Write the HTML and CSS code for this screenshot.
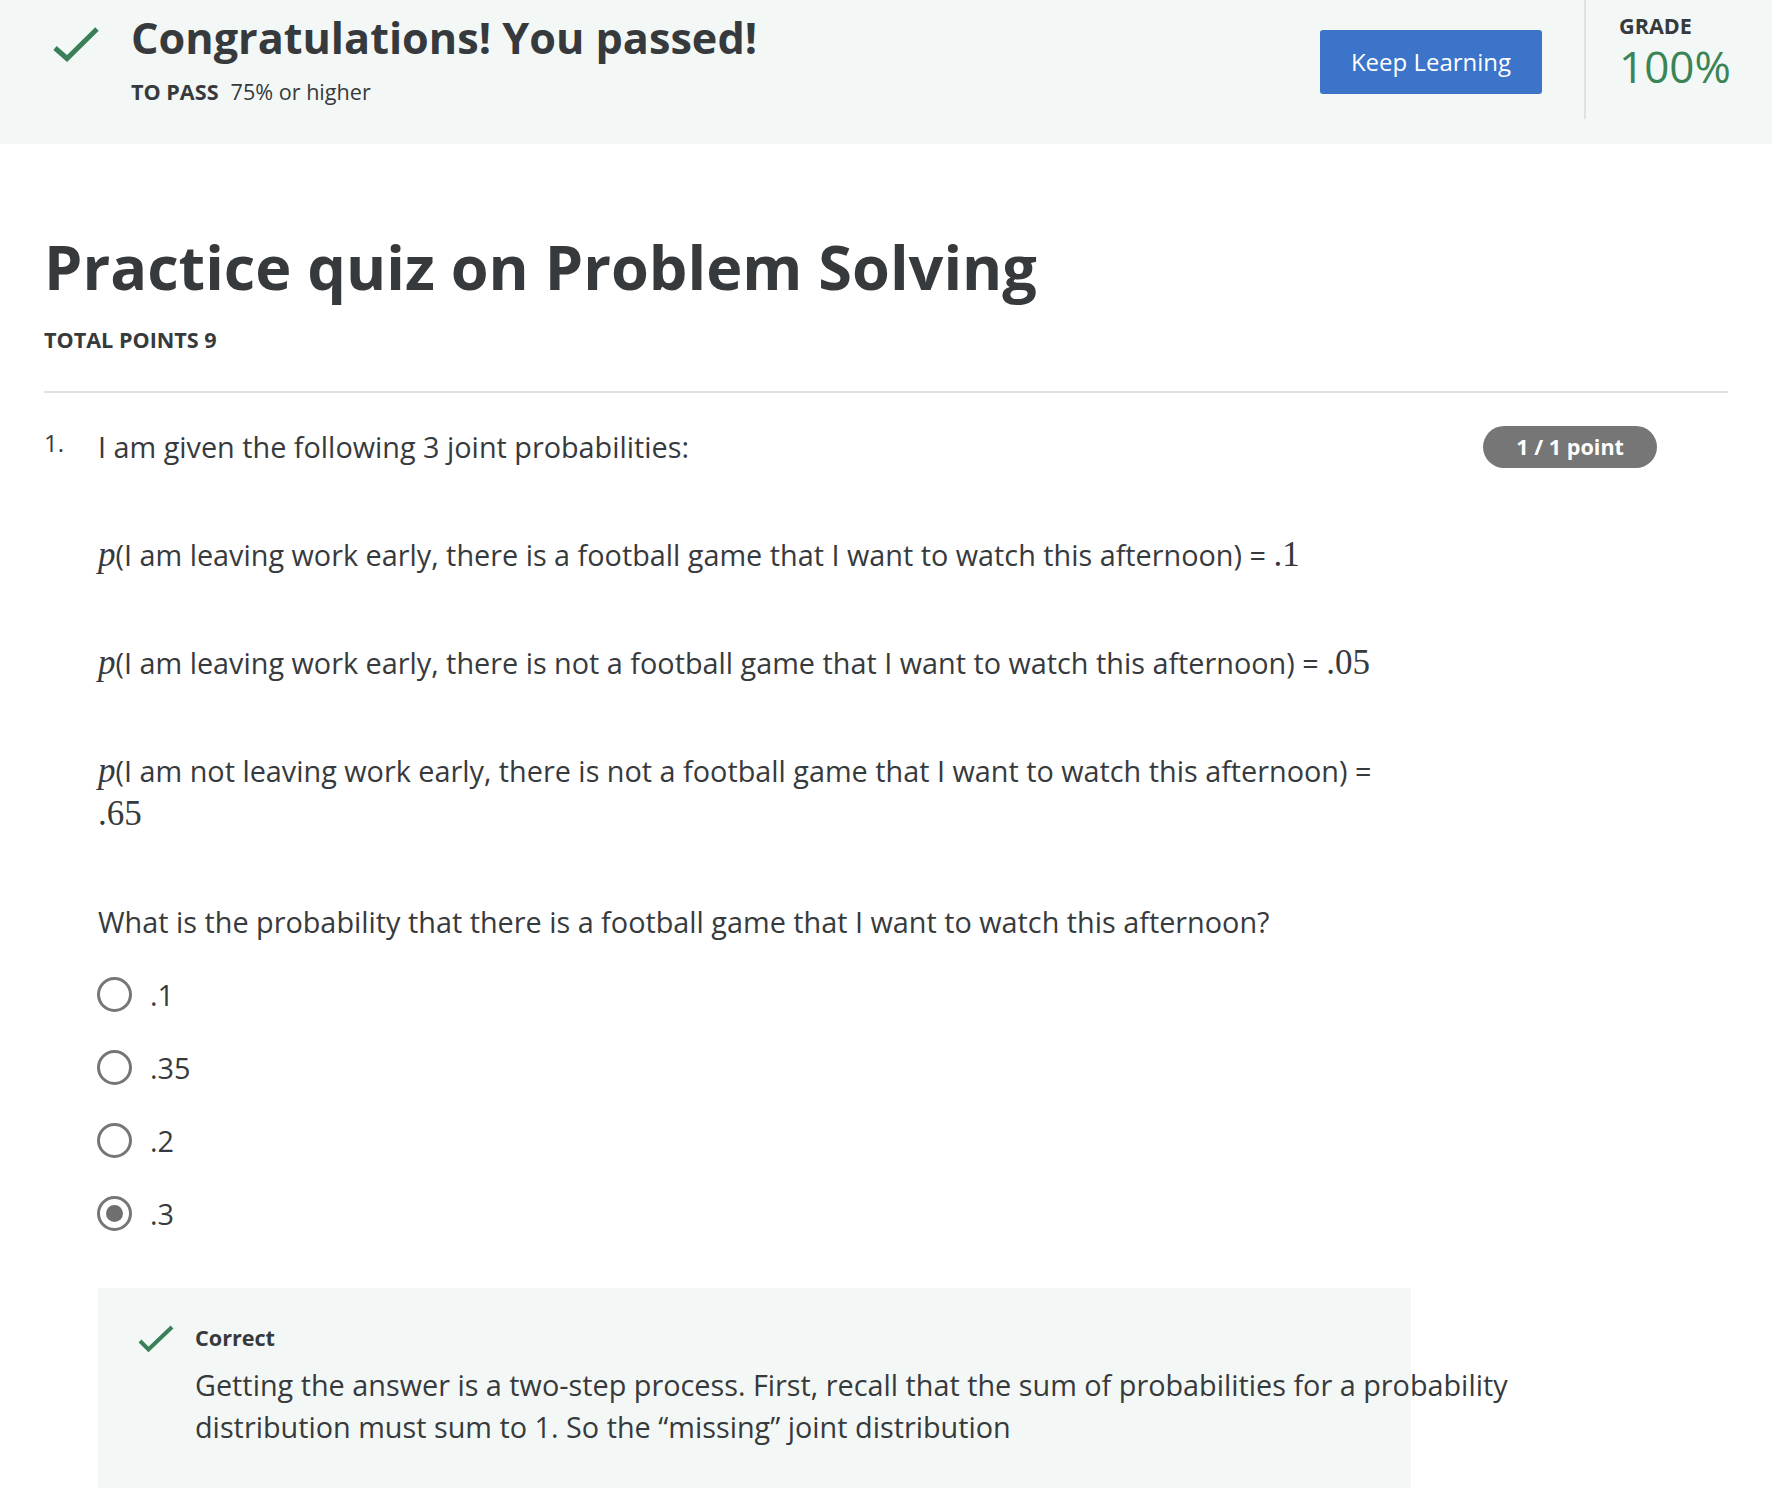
FILE: index.html
```html
<!DOCTYPE html>
<html lang="en">
<head>
<meta charset="utf-8">
<title>Practice quiz on Problem Solving</title>
<link rel="stylesheet" href="styles.css">
</head>
<body>
<header class="banner">
  <svg class="banner-check" width="52" height="40" viewBox="0 0 52 40"><polyline points="5,24 17,34.5 47,5" fill="none" stroke="#3a7f58" stroke-width="5"/></svg>
  <div class="banner-main">
    <h1 class="banner-title">Congratulations! You passed!</h1>
    <div class="banner-sub"><span class="label">TO PASS</span><span class="pass-value">75% or higher</span></div>
  </div>
  <button class="btn-primary">Keep Learning</button>
  <div class="divider"></div>
  <div class="grade">
    <div class="label">GRADE</div>
    <div class="grade-value">100%</div>
  </div>
</header>

<main class="content">
  <h2 class="quiz-title">Practice quiz on Problem Solving</h2>
  <div class="total label">TOTAL POINTS 9</div>
  <hr class="rule">

  <section class="question">
    <div class="q-num">1.</div>
    <div class="q-body">
      <p class="q-text">I am given the following 3 joint probabilities:</p>
      <p class="q-text"><span class="math mi">p</span>(I am leaving work early, there is a football game that I want to watch this afternoon) = <span class="math">.1</span></p>
      <p class="q-text"><span class="math mi">p</span>(I am leaving work early, there is not a football game that I want to watch this afternoon) = <span class="math">.05</span></p>
      <p class="q-text"><span class="math mi">p</span>(I am not leaving work early, there is not a football game that I want to watch this afternoon) =<br><span class="math">.65</span></p>
      <p class="q-text q-prompt">What is the probability that there is a football game that I want to watch this afternoon?</p>

      <div class="options">
        <div class="option"><span class="radio"></span><span class="opt-text">.1</span></div>
        <div class="option"><span class="radio"></span><span class="opt-text">.35</span></div>
        <div class="option"><span class="radio"></span><span class="opt-text">.2</span></div>
        <div class="option"><span class="radio checked"></span><span class="opt-text">.3</span></div>
      </div>

      <div class="feedback">
        <svg class="fb-check" width="40" height="34" viewBox="0 0 40 34"><polyline points="4,19 12.5,27.5 36,5" fill="none" stroke="#3a7f58" stroke-width="4"/></svg>
        <div class="fb-body">
          <div class="fb-title">Correct</div>
          <p class="fb-text">Getting the answer is a two-step process. First, recall that the sum of probabilities for a probability<br>distribution must sum to 1. So the “missing” joint distribution</p>
        </div>
      </div>
    </div>
    <div class="badge">1 / 1 point</div>
  </section>
</main>
</body>
</html>
```

FILE: styles.css
```css
* { box-sizing: border-box; }

html, body {
  margin: 0;
  padding: 0;
  background: #ffffff;
}

body {
  font-family: "Open Sans", "Noto Sans", "Liberation Sans", sans-serif;
  color: #373a3c;
}

.label {
  font-size: 21.6px;
  font-weight: 700;
  line-height: 30px;
  color: #373a3c;
}

/* ---------- banner ---------- */
.banner {
  display: flex;
  align-items: flex-start;
  height: 144px;
  background: #f3f8f6;
  padding-left: 50px;
  padding-right: 45px;
}

.banner-check {
  flex: none;
  margin-top: 24px;
}

.banner-main {
  flex: 1;
  margin-left: 29px;
  padding-top: 13px;
}

.banner-title {
  margin: 0;
  font-size: 43.2px;
  line-height: 50px;
  font-weight: 700;
  color: #373a3c;
}

.banner-sub {
  margin-top: 14px;
  display: flex;
  align-items: baseline;
  gap: 12px;
}

.pass-value {
  font-size: 21.6px;
  line-height: 30px;
  color: #373a3c;
}

.btn-primary {
  flex: none;
  margin-top: 30px;
  width: 222px;
  height: 64px;
  border: 0;
  border-radius: 3px;
  background: #3b74c8;
  color: #ffffff;
  font-family: "Open Sans", "Noto Sans", sans-serif;
  font-size: 24px;
  font-weight: 400;
  line-height: 60px;
  padding: 0;
}

.divider {
  flex: none;
  width: 2px;
  height: 119px;
  margin-left: 42px;
  background: #dfe2e1;
}

.grade {
  flex: none;
  width: 108px;
  margin-left: 33px;
  padding-top: 11px;
}

.grade-value {
  margin-top: 1px;
  font-size: 44px;
  line-height: 48px;
  color: #3b8456;
  white-space: nowrap;
}

/* ---------- content ---------- */
.content {
  padding: 0 44px;
}

.quiz-title {
  margin: 87px 0 0;
  font-size: 61.2px;
  line-height: 72px;
  font-weight: 700;
  color: #373a3c;
}

.total {
  margin-top: 22px;
}

.rule {
  margin: 36px 0 0;
  height: 2px;
  border: 0;
  background: #e1e1e1;
}

.question {
  display: flex;
  align-items: flex-start;
  margin-top: 32px;
  padding-right: 71px;
}

.q-num {
  flex: none;
  width: 54px;
  font-size: 24px;
  line-height: 36px;
}

.q-body {
  flex: none;
  width: 1313px;
}

.q-text {
  margin: 0 0 65px;
  font-size: 28.8px;
  line-height: 43px;
}

.q-prompt {
  margin-bottom: 15px;
}

.math {
  font-family: "Liberation Serif", "DejaVu Serif", serif;
  font-size: 35px;
  line-height: 1;
}

.mi {
  font-style: italic;
}

.options {
  display: flex;
  flex-direction: column;
}

.option {
  display: flex;
  align-items: center;
  height: 73px;
  gap: 18px;
}

.radio {
  position: relative;
  flex: none;
  width: 35px;
  height: 35px;
  margin-left: -1px;
  border: 3px solid #767676;
  border-radius: 50%;
  background: #ffffff;
}

.radio.checked::after {
  content: "";
  position: absolute;
  left: 6px;
  top: 6px;
  width: 17px;
  height: 17px;
  border-radius: 50%;
  background: #6f6f6f;
}

.opt-text {
  font-size: 28.8px;
  line-height: 43px;
}

.badge {
  flex: none;
  margin-left: auto;
  margin-top: 1px;
  height: 42px;
  padding: 0 33px;
  border-radius: 21px;
  background: #767676;
  color: #ffffff;
  font-size: 21.6px;
  font-weight: 700;
  line-height: 42px;
  white-space: nowrap;
}

/* ---------- feedback ---------- */
.feedback {
  display: flex;
  align-items: flex-start;
  width: 1313px;
  margin-top: 38px;
  padding: 34px 0 60px 38px;
  background: #f3f8f6;
}

.fb-check {
  flex: none;
}

.fb-body {
  flex: none;
  width: 1400px;
  margin-left: 19px;
  padding-top: 1px;
}

.fb-title {
  font-size: 21.6px;
  font-weight: 700;
  line-height: 30px;
}

.fb-text {
  margin: 11px 0 0;
  font-size: 28.8px;
  line-height: 42px;
  white-space: nowrap;
}
```
